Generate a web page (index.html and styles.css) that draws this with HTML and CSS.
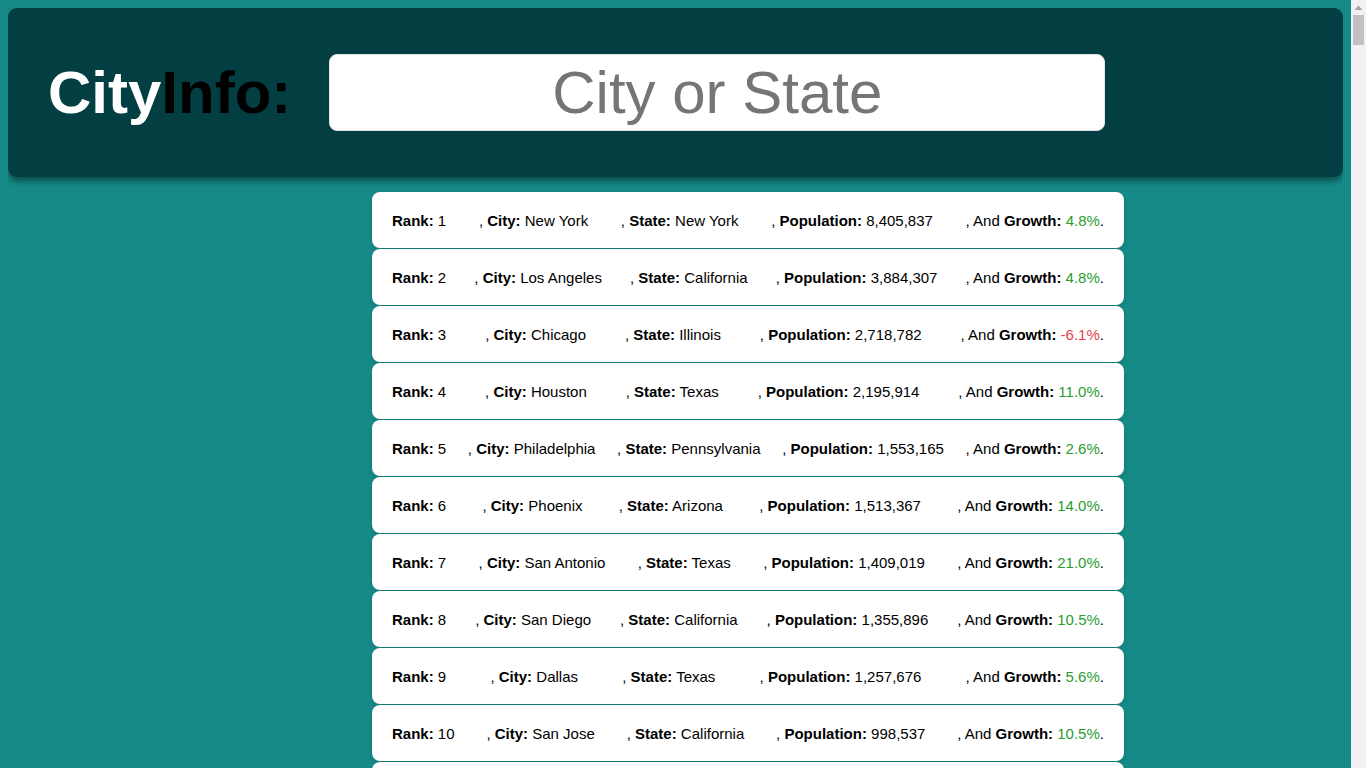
FILE: index.html
```html
<!DOCTYPE html>
<html lang="en">
<head>
<meta charset="utf-8">
<title>CityInfo</title>
<link rel="stylesheet" href="styles.css">
</head>
<body>
<header class="header">
  <h1 class="title"><span class="title-city">City</span><span class="title-info">Info:</span></h1>
  <input class="search" type="text" placeholder="City or State" autofocus>
</header>
<ul class="list">
  <li class="item"><span><b>Rank:</b> 1</span><span>, <b>City:</b> New York</span><span>, <b>State:</b> New York</span><span>, <b>Population:</b> 8,405,837</span><span>, And <b>Growth:</b> <span class="up">4.8%</span>.</span></li>
  <li class="item"><span><b>Rank:</b> 2</span><span>, <b>City:</b> Los Angeles</span><span>, <b>State:</b> California</span><span>, <b>Population:</b> 3,884,307</span><span>, And <b>Growth:</b> <span class="up">4.8%</span>.</span></li>
  <li class="item"><span><b>Rank:</b> 3</span><span>, <b>City:</b> Chicago</span><span>, <b>State:</b> Illinois</span><span>, <b>Population:</b> 2,718,782</span><span>, And <b>Growth:</b> <span class="down">-6.1%</span>.</span></li>
  <li class="item"><span><b>Rank:</b> 4</span><span>, <b>City:</b> Houston</span><span>, <b>State:</b> Texas</span><span>, <b>Population:</b> 2,195,914</span><span>, And <b>Growth:</b> <span class="up">11.0%</span>.</span></li>
  <li class="item"><span><b>Rank:</b> 5</span><span>, <b>City:</b> Philadelphia</span><span>, <b>State:</b> Pennsylvania</span><span>, <b>Population:</b> 1,553,165</span><span>, And <b>Growth:</b> <span class="up">2.6%</span>.</span></li>
  <li class="item"><span><b>Rank:</b> 6</span><span>, <b>City:</b> Phoenix</span><span>, <b>State:</b> Arizona</span><span>, <b>Population:</b> 1,513,367</span><span>, And <b>Growth:</b> <span class="up">14.0%</span>.</span></li>
  <li class="item"><span><b>Rank:</b> 7</span><span>, <b>City:</b> San Antonio</span><span>, <b>State:</b> Texas</span><span>, <b>Population:</b> 1,409,019</span><span>, And <b>Growth:</b> <span class="up">21.0%</span>.</span></li>
  <li class="item"><span><b>Rank:</b> 8</span><span>, <b>City:</b> San Diego</span><span>, <b>State:</b> California</span><span>, <b>Population:</b> 1,355,896</span><span>, And <b>Growth:</b> <span class="up">10.5%</span>.</span></li>
  <li class="item"><span><b>Rank:</b> 9</span><span>, <b>City:</b> Dallas</span><span>, <b>State:</b> Texas</span><span>, <b>Population:</b> 1,257,676</span><span>, And <b>Growth:</b> <span class="up">5.6%</span>.</span></li>
  <li class="item"><span><b>Rank:</b> 10</span><span>, <b>City:</b> San Jose</span><span>, <b>State:</b> California</span><span>, <b>Population:</b> 998,537</span><span>, And <b>Growth:</b> <span class="up">10.5%</span>.</span></li>
  <li class="item"><span><b>Rank:</b> 11</span><span>, <b>City:</b> Austin</span><span>, <b>State:</b> Texas</span><span>, <b>Population:</b> 885,400</span><span>, And <b>Growth:</b> <span class="up">31.7%</span>.</span></li>
  <li class="item"><span><b>Rank:</b> 12</span><span>, <b>City:</b> Indianapolis</span><span>, <b>State:</b> Indiana</span><span>, <b>Population:</b> 843,393</span><span>, And <b>Growth:</b> <span class="up">4.9%</span>.</span></li>
  <li class="item"><span><b>Rank:</b> 13</span><span>, <b>City:</b> Jacksonville</span><span>, <b>State:</b> Florida</span><span>, <b>Population:</b> 842,583</span><span>, And <b>Growth:</b> <span class="up">14.3%</span>.</span></li>
  <li class="item"><span><b>Rank:</b> 14</span><span>, <b>City:</b> San Francisco</span><span>, <b>State:</b> California</span><span>, <b>Population:</b> 837,442</span><span>, And <b>Growth:</b> <span class="up">7.7%</span>.</span></li>
  <li class="item"><span><b>Rank:</b> 15</span><span>, <b>City:</b> Columbus</span><span>, <b>State:</b> Ohio</span><span>, <b>Population:</b> 822,553</span><span>, And <b>Growth:</b> <span class="up">14.8%</span>.</span></li>
</ul>
<div class="scrollbar" aria-hidden="true">
  <svg class="scroll-arrow" width="15" height="15" viewBox="0 0 15 15"><path d="M3.5 10 L7.5 5.5 L11.5 10 Z" fill="#a3a3a3"/></svg>
  <div class="scroll-thumb"></div>
</div>
</body>
</html>
```

FILE: styles.css
```css
html, body {
  background: #168a87;
}
body {
  margin: 8px 23px 8px 8px;
  font-family: "Liberation Sans", Arial, sans-serif;
}
.scrollbar {
  position: fixed;
  top: 0;
  right: 0;
  bottom: 0;
  width: 15px;
  background: #f1f1f1;
  display: flex;
  flex-direction: column;
  align-items: center;
}
.scroll-arrow {
  display: block;
  flex: none;
}
.scroll-thumb {
  width: 11px;
  height: 30px;
  background: #c1c1c1;
}
.header {
  display: flex;
  align-items: center;
  height: 169px;
  box-sizing: border-box;
  padding: 0 40px;
  background: #033f42;
  border-radius: 9px;
  box-shadow: 0 4px 6px rgba(0, 0, 0, 0.45);
}
.title {
  margin: 0 38px 0 0;
  font-size: 60px;
  font-weight: bold;
  line-height: 1;
}
.title-city {
  color: #ffffff;
}
.title-info {
  color: #000000;
}
.search {
  width: 776px;
  height: 77px;
  box-sizing: border-box;
  border: 1px solid #e4e4e4;
  border-radius: 8px;
  background: #ffffff;
  font-family: "Liberation Sans", Arial, sans-serif;
  font-size: 60px;
  text-align: center;
  color: #333;
  outline: none;
  padding: 0 10px;
}
.search::placeholder {
  color: #757575;
}
.list {
  list-style: none;
  margin: 15px 0 0 364px;
  padding: 0;
  width: 752px;
}
.item {
  display: flex;
  justify-content: space-between;
  padding: 20px 20px 18px;
  line-height: 18px;
  font-size: 15px;
  color: #000;
  background: #ffffff;
  border-radius: 8px;
  margin-bottom: 1px;
  box-shadow: 0 2px 4px rgba(0, 0, 0, 0.12);
}
.up {
  color: #2a9d30;
}
.down {
  color: #e8404a;
}
```
